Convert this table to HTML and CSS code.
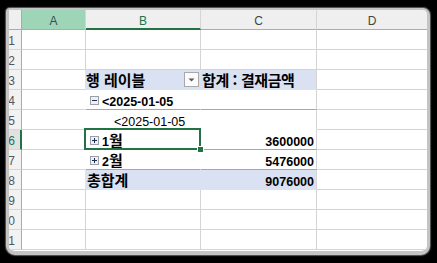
FILE: index.html
```html
<!DOCTYPE html>
<html lang="ko">
<head>
<meta charset="utf-8">
<title>피벗 테이블</title>
<link rel="stylesheet" href="styles.css">
</head>
<body>
<div class="sheet">
  <div class="corner"></div>
  <div class="ch ch-a">A</div>
  <div class="ch ch-b">B</div>
  <div class="ch">C</div>
  <div class="ch ch-d">D</div>

  <div class="rh">1</div><div class="c"></div><div class="c"></div><div class="c"></div><div class="c d"></div>
  <div class="rh">2</div><div class="c"></div><div class="c"></div><div class="c"></div><div class="c d"></div>

  <div class="rh">3</div>
  <div class="c pa-band"></div>
  <div class="c pv band t hd-b">
    <span class="lbl"><span class="ko b">행 레이블</span></span>
    <svg class="dd" width="15" height="15" viewBox="0 0 15 15"><rect x="0.5" y="0.5" width="14" height="14" fill="#fbfbfb" stroke="#a9a9a9"/><path d="M4.5 6.5h6l-3 3z" fill="#595959"/></svg>
  </div>
  <div class="c pv-c band t ind1">
    <span class="lbl"><span class="ko b tight">합계 : 결재금액</span></span>
  </div>
  <div class="c d"></div>

  <div class="rh">4</div>
  <div class="c pa"></div>
  <div class="c pv line t btn-row">
    <svg class="xb" width="9" height="9" viewBox="0 0 9 9"><rect x="0.5" y="0.5" width="8" height="8" fill="#eef0f4" stroke="#9aa0aa"/><rect x="2" y="4" width="5" height="1" fill="#1f2d50"/></svg>
    <span class="lbl b">&lt;2025-01-05</span>
  </div>
  <div class="c pv-c line"></div>
  <div class="c d"></div>

  <div class="rh">5</div>
  <div class="c pa"></div>
  <div class="c pv nol t ind-sub">
    <span class="lbl">&lt;2025-01-05</span>
  </div>
  <div class="c pv-c nol"></div>
  <div class="c d"></div>

  <div class="rh rh-sel">6</div>
  <div class="c pa"></div>
  <div class="c pv line t btn-row cur">
    <svg class="xb" width="9" height="9" viewBox="0 0 9 9"><rect x="0.5" y="0.5" width="8" height="8" fill="#eef0f4" stroke="#9aa0aa"/><rect x="2" y="4" width="5" height="1" fill="#1f2d50"/><rect x="4" y="2" width="1" height="5" fill="#1f2d50"/></svg>
    <span class="lbl b">1<span class="ko">월</span></span>
    <div class="sel"><div class="handle"></div></div>
  </div>
  <div class="c pv-c line t num"><span class="lbl b">3600000</span></div>
  <div class="c d"></div>

  <div class="rh">7</div>
  <div class="c pa"></div>
  <div class="c pv line t btn-row">
    <svg class="xb" width="9" height="9" viewBox="0 0 9 9"><rect x="0.5" y="0.5" width="8" height="8" fill="#eef0f4" stroke="#9aa0aa"/><rect x="2" y="4" width="5" height="1" fill="#1f2d50"/><rect x="4" y="2" width="1" height="5" fill="#1f2d50"/></svg>
    <span class="lbl b">2<span class="ko">월</span></span>
  </div>
  <div class="c pv-c line t num"><span class="lbl b">5476000</span></div>
  <div class="c d"></div>

  <div class="rh">8</div>
  <div class="c pa-band"></div>
  <div class="c pv band t ind1">
    <span class="lbl"><span class="ko b">총합계</span></span>
  </div>
  <div class="c pv-c band t num"><span class="lbl b">9076000</span></div>
  <div class="c d"></div>

  <div class="rh">9</div><div class="c"></div><div class="c"></div><div class="c"></div><div class="c d"></div>
  <div class="rh">10</div><div class="c"></div><div class="c"></div><div class="c"></div><div class="c d"></div>
  <div class="rh">11</div><div class="c"></div><div class="c"></div><div class="c"></div><div class="c d"></div>
</div>
</body>
</html>
```

FILE: styles.css
```css
* { box-sizing: border-box; }

html, body {
  margin: 0;
  background: #000;
}

body {
  width: 437px;
  height: 263px;
  padding: 8px 0 0 6px;
  overflow: hidden;
  font-family: "Liberation Sans", "Noto Sans CJK KR", sans-serif;
  color: #000;
}

.sheet {
  display: grid;
  grid-template-columns: 13px 64px 115px 116px 110px;
  grid-template-rows: repeat(12, 20px);
  width: 424px;
  height: 247px;
  background: #fff;
  border-style: solid;
  border-width: 2px 3px 4px 3px;
  border-color: #c4c4c4;
  border-radius: 4px 7px 9px 9px;
  box-shadow: 0 0 1px 1px #5a5a5a;
  overflow: hidden;
}

/* headers */
.corner {
  background: #efefef;
  border-right: 1px solid #ababab;
  border-bottom: 1px solid #ababab;
}

.ch {
  background: #efefef;
  border-right: 1px solid #d5d5d5;
  border-bottom: 1px solid #ababab;
  text-align: center;
  font-size: 12px;
  line-height: 18px;
  padding-top: 2px;
  color: #444;
}

.ch-a {
  background: #9fd5b7;
  color: #3b4a5c;
}

.ch-b {
  color: #217346;
  border-bottom: 2px solid #217346;
}

.ch-d { border-right: none; }

.rh {
  display: flex;
  justify-content: flex-end;
  background: #f2f2f2;
  border-right: 1px solid #ababab;
  border-bottom: 1px solid #d5d5d5;
  padding: 2px 6px 0 0;
  font-size: 12px;
  line-height: 18px;
  color: #555;
  overflow: hidden;
  white-space: nowrap;
}

.rh-sel {
  color: #217346;
  background: #e1e1e1;
  border-right: 2px solid #217346;
  padding-right: 5px;
}

/* grid cells */
.c {
  border-right: 1px solid #d4d4d4;
  border-bottom: 1px solid #d4d4d4;
}

.c.d { border-right: none; }

/* pivot table */
.pa { border-right-color: transparent; }
.pa-band { border-right-color: #d9e1f2; }

.pv {
  background: #fff;
  border-right-color: transparent;
}

.pv-c { background: #fff; }

.band {
  background: #d9e1f2;
  border-bottom-color: transparent;
}

.line { border-bottom-color: #8ea9db; }
.nol { border-bottom-color: transparent; }

.t {
  display: flex;
  align-items: flex-start;
  padding-top: 5px;
  font-size: 12.5px;
  line-height: 14px;
  white-space: nowrap;
}

.lbl { line-height: 14px; }

.b { font-weight: 700; }

.ko {
  font-family: "Noto Sans CJK KR", sans-serif;
  font-size: 15px;
  line-height: 0;
}

.tight { letter-spacing: -0.4px; }

.ind1 { padding-left: 1px; }
.ind-sub { padding-left: 28px; }

.hd-b {
  justify-content: space-between;
  padding-right: 1px;
}

.dd {
  display: block;
  margin-top: -3px;
}

.btn-row {
  padding-left: 4px;
  gap: 3px;
}

.xb {
  display: block;
  margin-top: 1px;
}

.num {
  justify-content: flex-end;
  padding-right: 2px;
}

/* current cell selection */
.cur { position: relative; }

.sel {
  position: absolute;
  top: -2px;
  left: -2px;
  right: -1px;
  bottom: -1px;
  border: 2px solid #217346;
}

.handle {
  position: absolute;
  right: -5px;
  bottom: -5px;
  width: 7px;
  height: 7px;
  background: #217346;
  border: 1px solid #fff;
}
```
